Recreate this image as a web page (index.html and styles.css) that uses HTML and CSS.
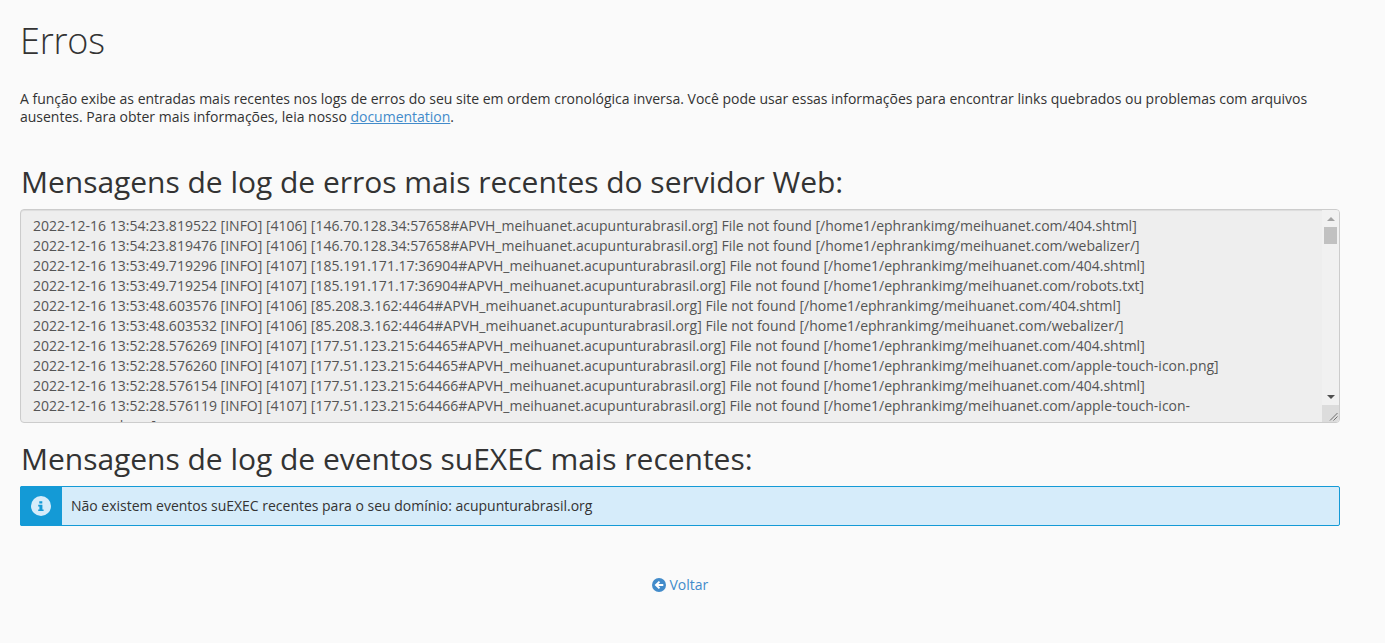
FILE: index.html
```html
<!DOCTYPE html>
<html lang="pt">
<head>
<meta charset="utf-8">
<title>Erros</title>
<link rel="stylesheet" href="styles.css">
</head>
<body>
<main class="page">
  <h1 class="title">Erros</h1>
  <p class="intro">A função exibe as entradas mais recentes nos logs de erros do seu site em ordem cronológica inversa. Você pode usar essas informações para encontrar links quebrados ou problemas com arquivos ausentes. Para obter mais informações, leia nosso <a href="#" class="doc-link">documentation</a>.</p>
  <h2 class="section-title section-first">Mensagens de log de erros mais recentes do servidor Web:</h2>
  <div class="log-box">
    <textarea class="log" readonly>2022-12-16 13:54:23.819522 [INFO] [4106] [146.70.128.34:57658#APVH_meihuanet.acupunturabrasil.org] File not found [/home1/ephrankimg/meihuanet.com/404.shtml]
2022-12-16 13:54:23.819476 [INFO] [4106] [146.70.128.34:57658#APVH_meihuanet.acupunturabrasil.org] File not found [/home1/ephrankimg/meihuanet.com/webalizer/]
2022-12-16 13:53:49.719296 [INFO] [4107] [185.191.171.17:36904#APVH_meihuanet.acupunturabrasil.org] File not found [/home1/ephrankimg/meihuanet.com/404.shtml]
2022-12-16 13:53:49.719254 [INFO] [4107] [185.191.171.17:36904#APVH_meihuanet.acupunturabrasil.org] File not found [/home1/ephrankimg/meihuanet.com/robots.txt]
2022-12-16 13:53:48.603576 [INFO] [4106] [85.208.3.162:4464#APVH_meihuanet.acupunturabrasil.org] File not found [/home1/ephrankimg/meihuanet.com/404.shtml]
2022-12-16 13:53:48.603532 [INFO] [4106] [85.208.3.162:4464#APVH_meihuanet.acupunturabrasil.org] File not found [/home1/ephrankimg/meihuanet.com/webalizer/]
2022-12-16 13:52:28.576269 [INFO] [4107] [177.51.123.215:64465#APVH_meihuanet.acupunturabrasil.org] File not found [/home1/ephrankimg/meihuanet.com/404.shtml]
2022-12-16 13:52:28.576260 [INFO] [4107] [177.51.123.215:64465#APVH_meihuanet.acupunturabrasil.org] File not found [/home1/ephrankimg/meihuanet.com/apple-touch-icon.png]
2022-12-16 13:52:28.576154 [INFO] [4107] [177.51.123.215:64466#APVH_meihuanet.acupunturabrasil.org] File not found [/home1/ephrankimg/meihuanet.com/404.shtml]
2022-12-16 13:52:28.576119 [INFO] [4107] [177.51.123.215:64466#APVH_meihuanet.acupunturabrasil.org] File not found [/home1/ephrankimg/meihuanet.com/apple-touch-icon-precomposed.png]</textarea>
    <div class="scrollbar" aria-hidden="true">
      <div class="sb-button">
        <svg class="sb-arrow" viewBox="0 0 8 4"><path d="M4 0l4 4H0z" fill="#a3a3a3"/></svg>
      </div>
      <div class="sb-thumb"></div>
      <div class="sb-track"></div>
      <div class="sb-button">
        <svg class="sb-arrow" viewBox="0 0 8 4"><path d="M0 0h8L4 4z" fill="#505050"/></svg>
      </div>
      <div class="sb-corner">
        <svg class="sb-grip" viewBox="0 0 17 17"><path d="M8 15.5 15.5 8M11.5 15.5l4-4" stroke="#6e6e6e" fill="none"/></svg>
      </div>
    </div>
  </div>
  <h2 class="section-title section-second">Mensagens de log de eventos suEXEC mais recentes:</h2>
  <div class="alert">
    <div class="alert-icon">
      <svg class="info-icon" viewBox="0 0 20 20" aria-hidden="true">
        <circle cx="10" cy="10" r="10" fill="#d6ecfa"/>
        <path d="M8.3 5.2h3v2.4h-3zM7.2 8.8h4.2v4.6h1.2v1.6H7.2v-1.6h1.2v-3H7.2z" fill="#149ad6"/>
      </svg>
    </div>
    <div class="alert-text">Não existem eventos suEXEC recentes para o seu domínio: acupunturabrasil.org</div>
  </div>
  <div class="back">
    <a href="#" class="back-link">
      <svg class="back-icon" viewBox="0 0 14 14" aria-hidden="true">
        <circle cx="7" cy="7" r="7" fill="#428bca"/>
        <path d="M2.6 7 6.8 2.9 8.2 4.3 6.4 6h4.9v2H6.4l1.8 1.7-1.4 1.4z" fill="#fff"/>
      </svg>
      Voltar
    </a>
  </div>
</main>
</body>
</html>
```
FILE: styles.css
```css
* { box-sizing: border-box; }
html, body { margin: 0; height: 100%; }
body {
  background: #fafafa;
  color: #333;
  font-family: "Open Sans", "Liberation Sans", sans-serif;
  font-size: 14px;
  line-height: 18px;
  overflow: hidden;
}
.page {
  width: 1320px;
  margin-left: 20px;
}
.title {
  margin: 0;
  padding-top: 21px;
  font-size: 36px;
  font-weight: 300;
  line-height: 40px;
  letter-spacing: -0.2px;
  color: #333;
}
.intro {
  margin: 29px 0 0;
  letter-spacing: -0.008px;
}
.doc-link, .back-link {
  color: #428bca;
}
.doc-link { text-decoration: underline; }
.section-title {
  margin: 0;
  padding-left: 1px;
  font-size: 30px;
  font-weight: 400;
  line-height: 33px;
  letter-spacing: -0.03px;
  color: #333;
}
.section-first { margin-top: 39px; }
.section-second { margin-top: 19px; }
.log-box {
  position: relative;
  height: 214px;
  margin-top: 11px;
}
.log {
  display: block;
  width: 100%;
  height: 100%;
  padding: 6px 29px 6px 12px;
  border: 1px solid #ccc;
  border-radius: 4px;
  background: #eee;
  box-shadow: inset 0 1px 1px rgba(0,0,0,.075);
  color: #555;
  font: inherit;
  line-height: 20px;
  letter-spacing: 0.006px;
  outline: none;
  resize: none;
  overflow: hidden;
}
.scrollbar {
  position: absolute;
  top: 1px;
  right: 1px;
  bottom: 1px;
  width: 17px;
  display: flex;
  flex-direction: column;
  background: #f1f1f1;
  border-radius: 0 3px 3px 0;
  overflow: hidden;
}
.sb-button {
  flex: none;
  height: 17px;
  display: flex;
  align-items: center;
  justify-content: center;
}
.sb-arrow { width: 8px; height: 4px; display: block; }
.sb-thumb {
  flex: none;
  height: 17px;
  margin: 0 2px;
  background: #c1c1c1;
}
.sb-track { flex: 1; }
.sb-corner {
  flex: none;
  height: 17px;
  background: #dcdcdc;
}
.sb-grip { width: 17px; height: 17px; display: block; }
.alert {
  display: flex;
  height: 40px;
  margin-top: 11px;
  border: 1px solid #149ad6;
  border-radius: 2px;
  background: #d6ecfa;
}
.alert-icon {
  display: flex;
  align-items: center;
  justify-content: center;
  width: 42px;
  margin: -1px 0 -1px -1px;
  background: #149ad6;
  border-radius: 2px 0 0 2px;
}
.info-icon { width: 20px; height: 20px; display: block; }
.alert-text {
  display: flex;
  align-items: center;
  padding-left: 9px;
  letter-spacing: -0.012px;
}
.back {
  margin-top: 50px;
  text-align: center;
}
.back-link { text-decoration: none; }
.back-icon { width: 14px; height: 14px; vertical-align: -2px; }
```
